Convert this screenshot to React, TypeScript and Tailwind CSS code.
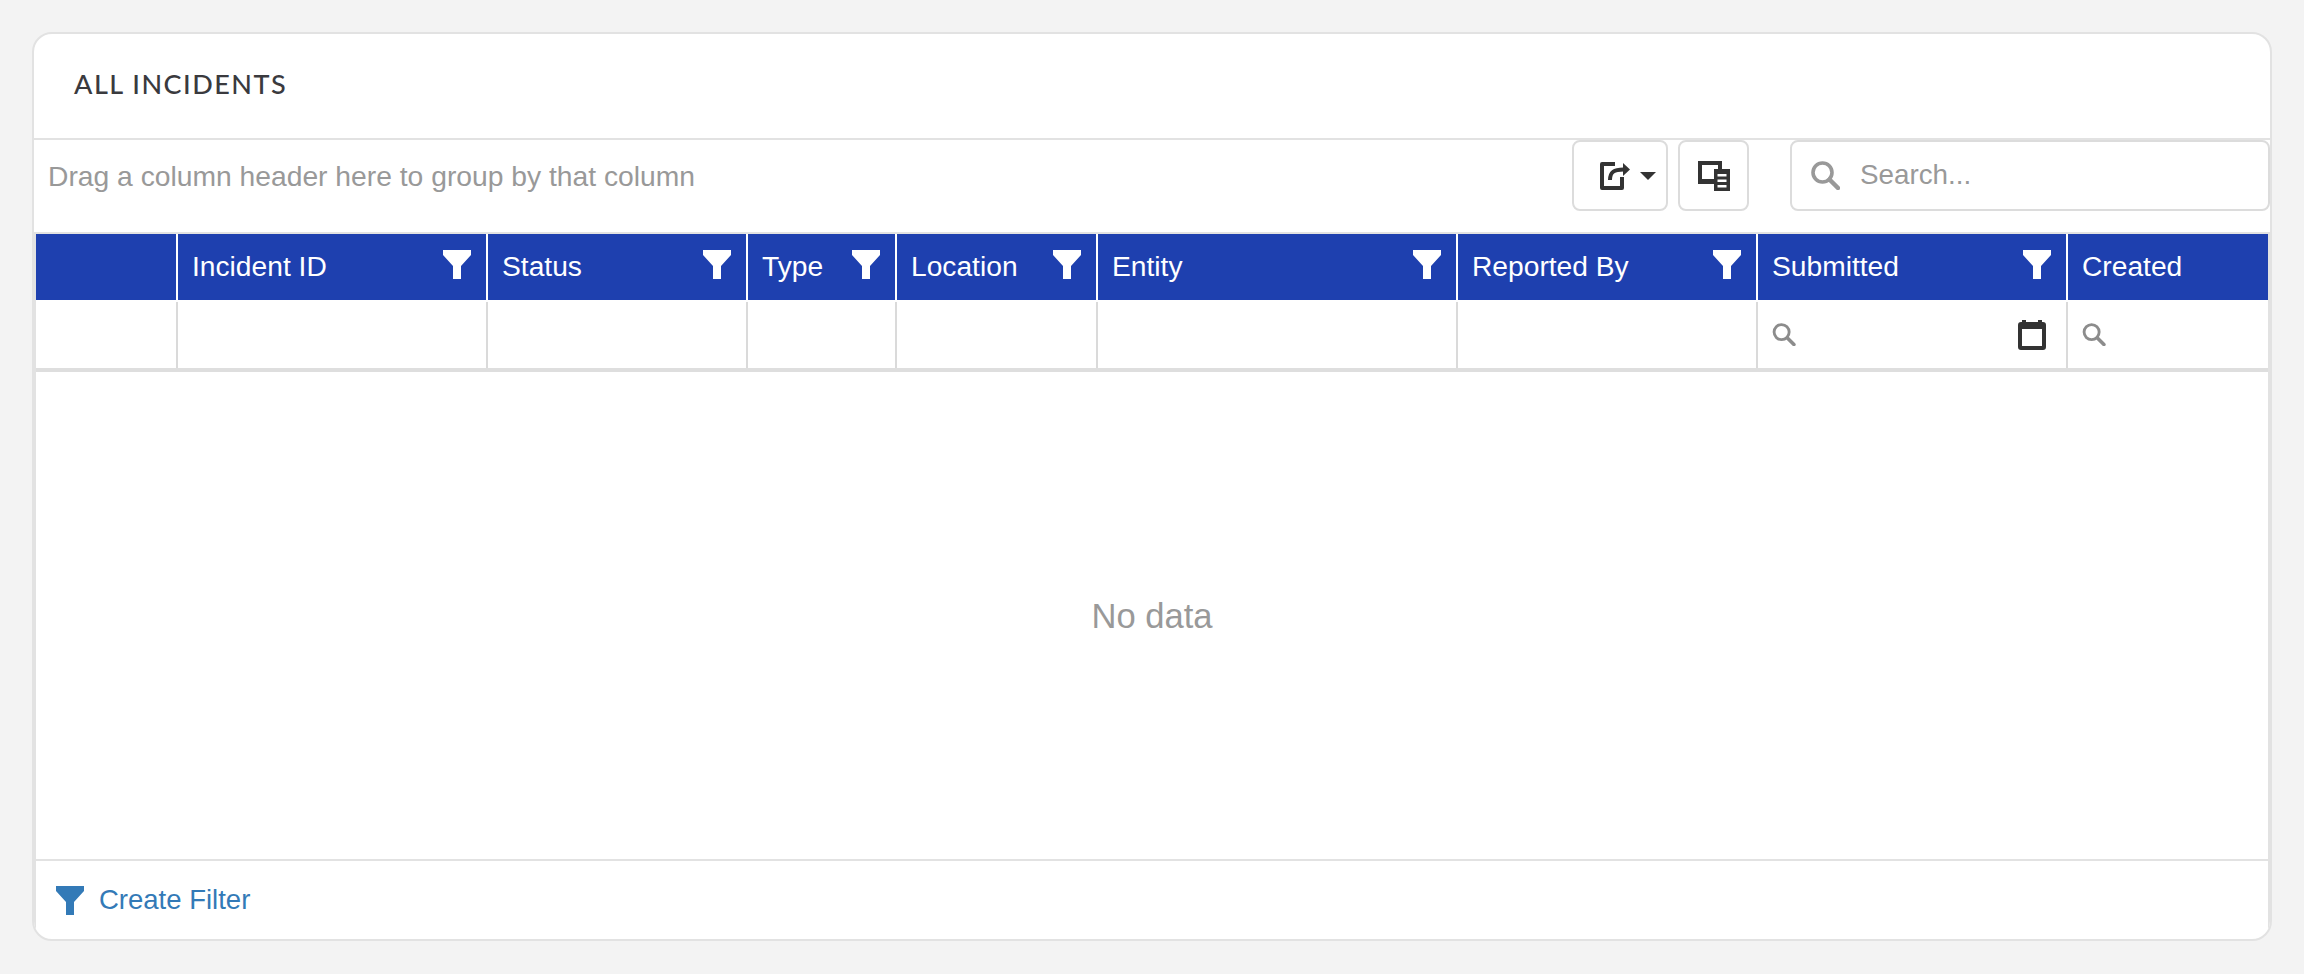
import React from "react";

const columns = [
  { label: "", filter: false },
  { label: "Incident ID", filter: true },
  { label: "Status", filter: true },
  { label: "Type", filter: true },
  { label: "Location", filter: true },
  { label: "Entity", filter: true },
  { label: "Reported By", filter: true },
  { label: "Submitted", filter: true },
  { label: "Created", filter: false },
];

function Funnel({ className }: { className: string }) {
  return (
    <svg viewBox="0 0 28 29" className={className} fill="currentColor">
      <polygon points="0,0 28,0 28,5 18,16 18,29 10,29 10,16 0,5" />
    </svg>
  );
}

function SearchIcon({ className }: { className: string }) {
  return (
    <svg viewBox="0 0 29 29" className={className} fill="none" stroke="currentColor">
      <circle cx="11.5" cy="11.5" r="9.5" strokeWidth="3.6" />
      <line x1="18.5" y1="18.5" x2="27" y2="27" strokeWidth="4.5" strokeLinecap="round" />
    </svg>
  );
}

function ExportIcon() {
  return (
    <svg viewBox="0 0 30 28" className="w-[30px] h-[28px] text-[#333]" fill="currentColor">
      <path d="M2,0 H15 V4 H4 V24 H20 V15 H24 V26 a2,2 0 0 1 -2,2 H2 a2,2 0 0 1 -2,-2 V2 a2,2 0 0 1 2,-2 Z" />
      <path d="M10,18 C10,10 14,7.5 23.5,7.5" fill="none" stroke="currentColor" strokeWidth="4" />
      <polygon points="23,1 30,7.5 23,14" />
    </svg>
  );
}

function ChooserIcon() {
  return (
    <svg viewBox="0 0 32 30" className="w-[32px] h-[30px] text-[#333]" fill="currentColor">
      <path fillRule="evenodd" d="M0,0 H24 V23 H0 Z M4,4 V18 H20 V4 Z" />
      <rect x="16" y="8" width="16" height="22" />
      <rect x="19.5" y="13" width="9" height="2.5" fill="#fff" />
      <rect x="19.5" y="18.5" width="9" height="2.5" fill="#fff" />
      <rect x="19.5" y="24" width="9" height="2.5" fill="#fff" />
    </svg>
  );
}

function CalendarIcon() {
  return (
    <svg viewBox="0 0 28 30" className="w-[28px] h-[30px] text-[#333]" fill="currentColor">
      <path
        fillRule="evenodd"
        d="M4,0 H8 V2 H20 V0 H24 V2 H25 a3,3 0 0 1 3,3 V27 a3,3 0 0 1 -3,3 H3 a3,3 0 0 1 -3,-3 V5 a3,3 0 0 1 3,-3 H4 Z M4,9 V26 H24 V9 Z"
      />
    </svg>
  );
}

export default function App() {
  return (
    <div className="min-h-[974px] bg-[#f3f3f3] pt-[32px] pl-[32px] font-['Liberation_Sans',Arial,sans-serif]">
      <div className="w-[2240px] h-[909px] bg-white border-2 border-[#e2e2e2] rounded-[20px] overflow-hidden flex flex-col">
        <div className="h-[106px] shrink-0 border-b-2 border-[#e2e2e2] pl-[40px] flex items-center pb-[4px]">
          <h2 className="font-['Lato',sans-serif] font-medium text-[27px] text-[#3a3a3e] tracking-[1.5px]">ALL INCIDENTS</h2>
        </div>

        <div className="h-[92px] shrink-0 flex items-start">
          <div className="h-[71px] flex-1 flex items-center pl-[14px] pt-[2px] text-[28.25px] text-[#999]">
            Drag a column header here to group by that column
          </div>
          <button className="h-[71px] w-[96px] border-2 border-[#dcdcdc] rounded-[8px] flex items-center pl-[26px] text-[#333]">
            <ExportIcon />
            <span className="ml-[10px] border-x-[8px] border-x-transparent border-t-[8px] border-t-[#333]" />
          </button>
          <button className="ml-[10px] h-[71px] w-[71px] border-2 border-[#dcdcdc] rounded-[8px] flex items-center justify-center">
            <ChooserIcon />
          </button>
          <div className="ml-[41px] h-[71px] w-[480px] border-2 border-[#dcdcdc] rounded-[8px] flex items-center pl-[19px]">
            <SearchIcon className="w-[29px] h-[29px] text-[#999] shrink-0" />
            <input
              placeholder="Search..."
              className="ml-[20px] flex-1 min-w-0 outline-none bg-transparent text-[27.8px] pb-[1px] placeholder:text-[#999]"
            />
          </div>
        </div>

        <div className="flex-1 min-h-0 border-2 border-b-0 border-[#e2e2e2] flex flex-col">
          <div className="grid grid-cols-[142px_310px_260px_149px_201px_360px_300px_310px_200px] h-[66px] shrink-0 bg-[#1e40af] text-white text-[28.2px]">
            {columns.map((c, i) => (
              <div
                key={i}
                className={`flex items-center justify-between pl-[14px] pr-[15px] ${i < columns.length - 1 ? "border-r-2 border-white" : ""}`}
              >
                <span className="pb-[1px]">{c.label}</span>
                {c.filter && <Funnel className="w-[28px] h-[29px] mb-[5px] shrink-0" />}
              </div>
            ))}
          </div>
          <div className="grid grid-cols-[142px_310px_260px_149px_201px_360px_300px_310px_200px] h-[72px] shrink-0 border-b-4 border-[#dedede]">
            {columns.map((c, i) => (
              <div key={i} className="pt-[2px] h-full">
                <div
                  className={`h-full flex items-center justify-between pl-[14px] pr-[20px] ${i < columns.length - 1 ? "border-r-2 border-[#dadada]" : ""}`}
                >
                  {i >= 7 && <SearchIcon className="w-[24px] h-[23px] text-[#8c8c8c] mb-[2px]" />}
                  {i === 7 && <CalendarIcon />}
                </div>
              </div>
            ))}
          </div>
          <div className="flex-1 flex items-center justify-center pt-[2px] text-[34.6px] text-[#999]">No data</div>
          <div className="h-[80px] shrink-0 border-t-2 border-[#e2e2e2] flex items-center pl-[20px] text-[#337ab7]">
            <Funnel className="w-[28px] h-[29px] shrink-0" />
            <a className="ml-[15px] text-[27.5px]">Create Filter</a>
          </div>
        </div>
      </div>
    </div>
  );
}
